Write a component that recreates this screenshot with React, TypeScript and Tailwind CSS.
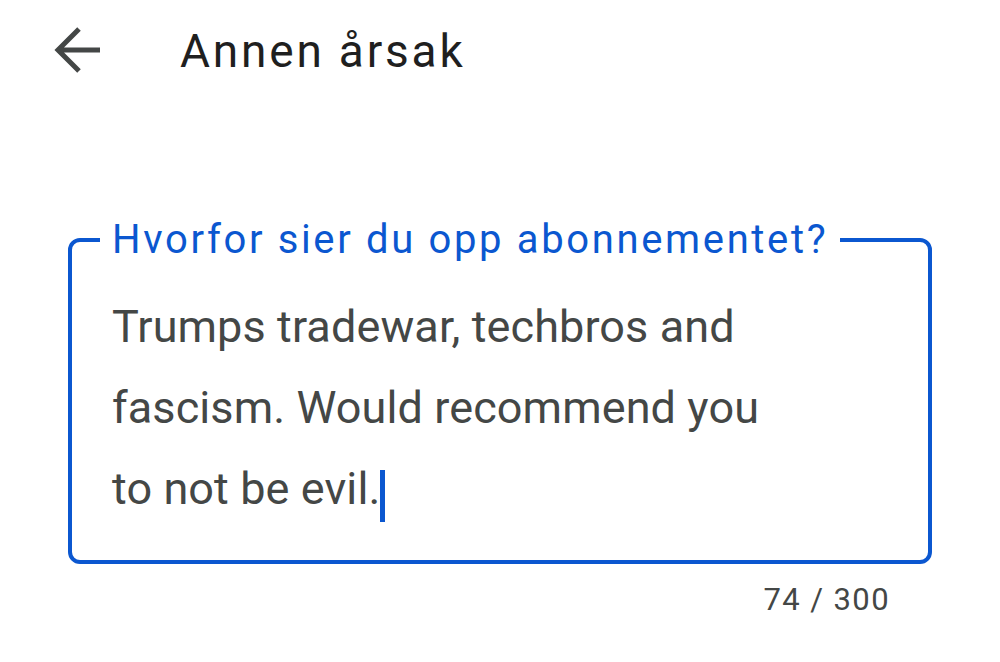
import React from 'react';

const font = { fontFamily: 'Roboto, "Noto Sans", sans-serif' };

export default function App() {
  return (
    <div className="w-[1000px] h-[662px] bg-white overflow-hidden" style={font}>
      {/* Top bar */}
      <div className="flex items-center h-[102px] pl-[51px]">
        <svg width="52" height="52" viewBox="0 0 52 52" className="text-[#444746]">
          <path d="M49 25H7M28 4L7 25l21 21" fill="none" stroke="currentColor" strokeWidth="5" />
        </svg>
        <h1 className="ml-[77px] text-[46px] tracking-[2.8px] text-[#1f1f1f]">Annen årsak</h1>
      </div>

      {/* Text field */}
      <div className="mt-[116px] pl-[68px] pr-[68px]">
        <fieldset className="border-4 border-[#0b57d0] rounded-[12px] pl-[28px] pr-[20px] pb-[31px]">
          <legend className="pl-[12px] pr-[12px] text-[40px] leading-[44px] tracking-[2.65px] text-[#0b57d0]">
            Hvorfor sier du opp abonnementet?
          </legend>
          <div className="pl-[12px] pt-[24px] text-[45px] leading-[81px] tracking-[0.1px] text-[#444746]">
            <div>Trumps tradewar, techbros and</div>
            <div>fascism. Would recommend you</div>
            <div className="flex items-start">
              to not be evil.
              <span className="inline-block w-[5px] h-[52px] bg-[#0b57d0] mt-[22px]" />
            </div>
          </div>
        </fieldset>
        <div className="flex justify-end pr-[42px] pt-[18px] text-[31px] leading-[36px] tracking-[1.4px] text-[#444746]">
          74 / 300
        </div>
      </div>
    </div>
  );
}
